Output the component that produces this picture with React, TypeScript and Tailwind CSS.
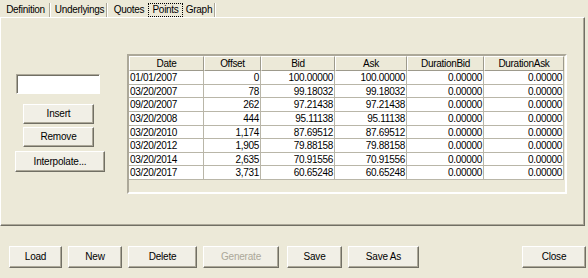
import React from 'react';

const tabs = [
  { label: 'Definition', w: 'w-[47px]', sep: true },
  { label: 'Underlyings', w: 'w-[53px]', sep: true },
  { label: 'Quotes', w: 'w-[38px]', sep: false },
  { label: 'Points', w: 'w-[35px]', sep: false },
  { label: 'Graph', w: 'w-[30px]', sep: true },
];

const columns = [
  { title: 'Date', w: 'w-[75px]' },
  { title: 'Offset', w: 'w-[57px]' },
  { title: 'Bid', w: 'w-[74px]' },
  { title: 'Ask', w: 'w-[72px]' },
  { title: 'DurationBid', w: 'w-[77px]' },
  { title: 'DurationAsk', w: 'w-[80px]' },
];

const rows = [
  ['01/01/2007', '0', '100.00000', '100.00000', '0.00000', '0.00000'],
  ['03/20/2007', '78', '99.18032', '99.18032', '0.00000', '0.00000'],
  ['09/20/2007', '262', '97.21438', '97.21438', '0.00000', '0.00000'],
  ['03/20/2008', '444', '95.11138', '95.11138', '0.00000', '0.00000'],
  ['03/20/2010', '1,174', '87.69512', '87.69512', '0.00000', '0.00000'],
  ['03/20/2012', '1,905', '79.88158', '79.88158', '0.00000', '0.00000'],
  ['03/20/2014', '2,635', '70.91556', '70.91556', '0.00000', '0.00000'],
  ['03/20/2017', '3,731', '60.65248', '60.65248', '0.00000', '0.00000'],
];

const rowHeights = ['h-[14px]', 'h-[13px]', 'h-[14px]', 'h-[14px]', 'h-[13px]', 'h-[14px]', 'h-[13px]', 'h-[14px]'];

interface BtnProps {
  label: string;
  className?: string;
  disabled?: boolean;
}

const Btn: React.FC<BtnProps> = ({ label, className = '', disabled }) => (
  <button
    className={`flex items-center justify-center bg-[#F1EFE6] border border-t-white border-l-white border-r-[#716F64] border-b-[#716F64] shadow-[inset_-1px_-1px_0_#ACA899] text-[10px] tracking-[-0.2px] leading-none ${
      disabled ? 'text-[#ACA899]' : 'text-black'
    } ${className}`}
  >
    {label}
  </button>
);

export default function App() {
  return (
    <div
      className="w-[588px] h-[278px] bg-[#ECE9D8] text-black text-[10px] overflow-hidden"
      style={{ fontFamily: '"Liberation Sans", Arial, sans-serif' }}
    >
      {/* tab strip */}
      <div className="flex h-[17px] pl-[2px] pt-[3px] tracking-[-0.3px]">
        {tabs.map((t) => {
          const active = t.label === 'Points';
          return (
            <div key={t.label} className="flex items-stretch">
              <div
                className={`${t.w} flex items-center justify-center leading-none ${
                  active ? 'outline outline-1 outline-dotted outline-black -outline-offset-1 mr-[1px]' : ''
                }`}
              >
                {t.label}
              </div>
              {t.sep && <div className="w-[2px] border-l border-[#ACA899] border-r border-r-white mr-[2px]" />}
            </div>
          );
        })}
      </div>

      {/* tab panel */}
      <div className="w-[585px] h-[209px] border-t border-l border-t-white border-l-white border-r border-b border-r-[#716F64] border-b-[#716F64] shadow-[inset_-1px_-1px_0_#ACA899] flex">
        <div className="w-[118px] flex flex-col items-start pt-[56px]">
          <input className="ml-[15px] w-[84px] h-[20px] bg-white border border-t-[#ACA899] border-l-[#ACA899] border-r-white border-b-white shadow-[inset_1px_1px_0_#716F64] outline-none" />
          <Btn label="Insert" className="ml-[22px] w-[71px] h-[20px] mt-[10px]" />
          <Btn label="Remove" className="ml-[22px] w-[71px] h-[20px] mt-[3px]" />
          <Btn label="Interpolate..." className="ml-[14px] w-[90px] h-[21px] mt-[4px]" />
        </div>

        {/* grid */}
        <div className="ml-[8px] mt-[36px] w-[440px] h-[140px] border-2 border-t-[#ACA899] border-l-[#ACA899] border-r-white border-b-white bg-[#ECE9D8] text-[10px] tracking-[-0.3px]">
          <div className="flex h-[15px]">
            {columns.map((c) => (
              <div
                key={c.title}
                className={`${c.w} shrink-0 flex items-center justify-center bg-[#ECE9D8] border-r border-b border-[#9D9A8C] border-t border-l border-t-white border-l-white`}
              >
                {c.title}
              </div>
            ))}
          </div>
          {rows.map((r, i) => (
            <div key={r[0]} className={`flex ${rowHeights[i]}`}>
              {r.map((v, j) => (
                <div
                  key={j}
                  className={`${columns[j].w} shrink-0 flex items-center ${
                    j === 0 ? 'justify-start pl-[1px]' : 'justify-end pr-[1px]'
                  } bg-white border-r border-b border-[#B9B6A8]`}
                >
                  {v}
                </div>
              ))}
            </div>
          ))}
        </div>
      </div>

      {/* bottom buttons */}
      <div className="flex mt-[20px] pl-[9px]">
        <Btn label="Load" className="w-[53px] h-[22px]" />
        <Btn label="New" className="w-[54px] h-[22px] ml-[6px]" />
        <Btn label="Delete" className="w-[69px] h-[22px] ml-[6px]" />
        <Btn label="Generate" className="w-[76px] h-[22px] ml-[6px]" disabled />
        <Btn label="Save" className="w-[55px] h-[22px] ml-[8px]" />
        <Btn label="Save As" className="w-[71px] h-[22px] ml-[6px]" />
        <Btn label="Close" className="w-[64px] h-[22px] ml-auto mr-[2px]" />
      </div>
    </div>
  );
}
